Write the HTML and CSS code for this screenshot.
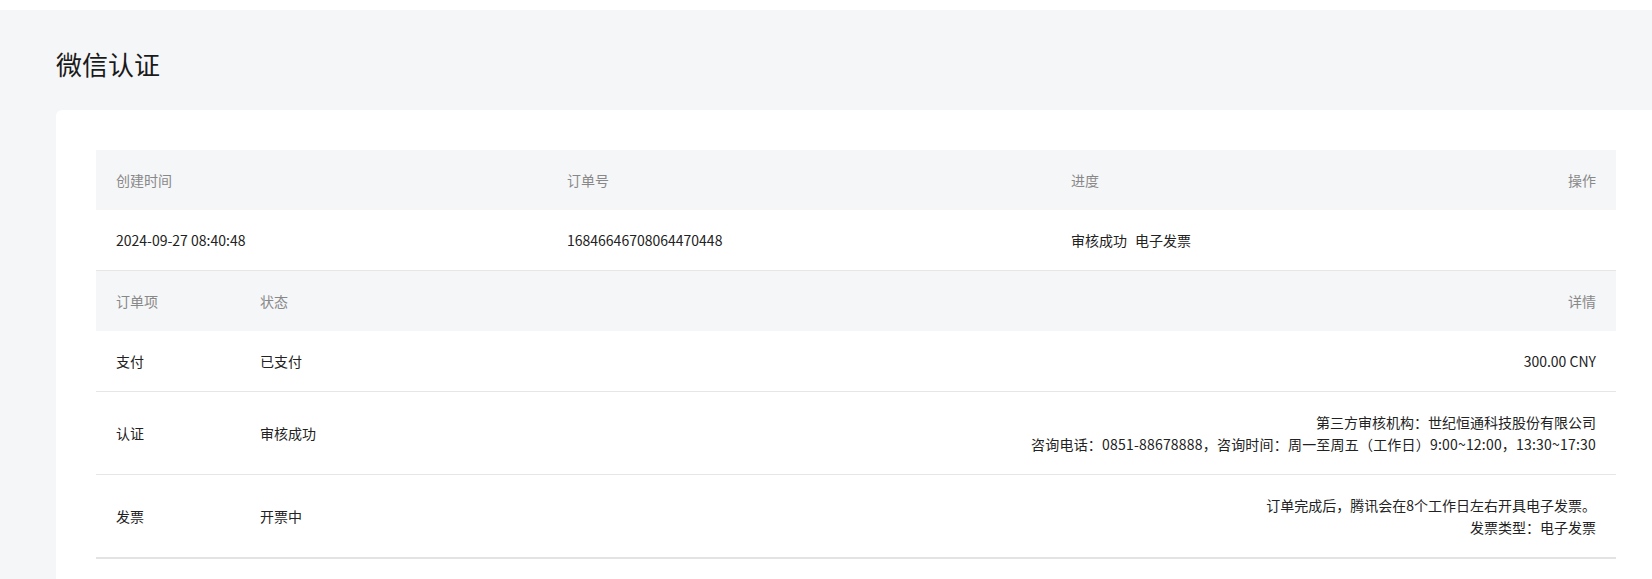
FILE: index.html
```html
<!DOCTYPE html>
<html lang="zh-CN">
<head>
    <meta charset="UTF-8">
    <meta name="viewport" content="width=device-width, initial-scale=1.0">
    <title>微信认证</title>
    <link rel="stylesheet" href="styles.css">
</head>
<body>
    <div class="page">
        <h1 class="page-title">微信认证</h1>

        <div class="card">
            <table class="order-table">
                <colgroup>
                    <col class="col-time">
                    <col class="col-no">
                    <col class="col-progress">
                    <col>
                </colgroup>
                <thead>
                    <tr>
                        <th>创建时间</th>
                        <th>订单号</th>
                        <th>进度</th>
                        <th class="right">操作</th>
                    </tr>
                </thead>
                <tbody>
                    <tr>
                        <td>2024-09-27 08:40:48</td>
                        <td>16846646708064470448</td>
                        <td><span class="step">审核成功</span><span class="step">电子发票</span></td>
                        <td class="right"></td>
                    </tr>
                </tbody>
            </table>

            <table class="order-table items">
                <colgroup>
                    <col class="col-item">
                    <col class="col-status">
                    <col>
                </colgroup>
                <thead>
                    <tr>
                        <th>订单项</th>
                        <th>状态</th>
                        <th class="right">详情</th>
                    </tr>
                </thead>
                <tbody>
                    <tr>
                        <td>支付</td>
                        <td>已支付</td>
                        <td class="right">300.00 CNY</td>
                    </tr>
                    <tr>
                        <td>认证</td>
                        <td>审核成功</td>
                        <td class="right">
                            第三方审核机构：世纪恒通科技股份有限公司<br>
                            <span class="wide">咨询电话：0851-88678888，咨询时间：周一至周五（工作日）9:00~12:00，13:30~17:30</span>
                        </td>
                    </tr>
                    <tr class="last">
                        <td>发票</td>
                        <td>开票中</td>
                        <td class="right">
                            订单完成后，腾讯会在8个工作日左右开具电子发票。<br>
                            发票类型：电子发票
                        </td>
                    </tr>
                </tbody>
            </table>
        </div>
    </div>
</body>
</html>
```

FILE: styles.css
```css
html, body {
    margin: 0;
    padding: 0;
    background-color: #fff;
}
body {
    font-family: "Noto Sans CJK SC", "Noto Sans", sans-serif;
    color: #222;
    font-size: 14px;
}
.page {
    margin-top: 10px;
    background-color: #f5f6f8;
    padding: 36px 0 0 56px;
    min-height: 569px;
    box-sizing: border-box;
}
.page-title {
    margin: 0 0 28px;
    font-size: 26px;
    line-height: 36px;
    font-weight: 400;
    color: #1a1a1a;
}
.card {
    background-color: #fff;
    border-radius: 6px 0 0 0;
    padding: 40px 36px 30px 40px;
    min-height: 433px;
    box-sizing: border-box;
}
.order-table {
    width: 100%;
    table-layout: fixed;
    border-collapse: separate;
    border-spacing: 0;
}
.col-time { width: 451px; }
.col-no { width: 504px; }
.col-progress { width: 400px; }
.col-item { width: 144px; }
.col-status { width: 400px; }

.order-table th {
    height: 60px;
    padding: 0 20px;
    background-color: #f5f6f8;
    color: #888;
    font-weight: 400;
    text-align: left;
    box-sizing: border-box;
}
.order-table td {
    padding: 19px 20px;
    line-height: 22px;
    border-bottom: 1px solid #e6e6e6;
    vertical-align: middle;
    color: #222;
}
.order-table .right {
    text-align: right;
}
.step {
    margin-right: 8px;
}
.wide {
    letter-spacing: 0.2px;
}
.items tr.last td {
    border-bottom: 2px solid #e3e3e3;
}
```
